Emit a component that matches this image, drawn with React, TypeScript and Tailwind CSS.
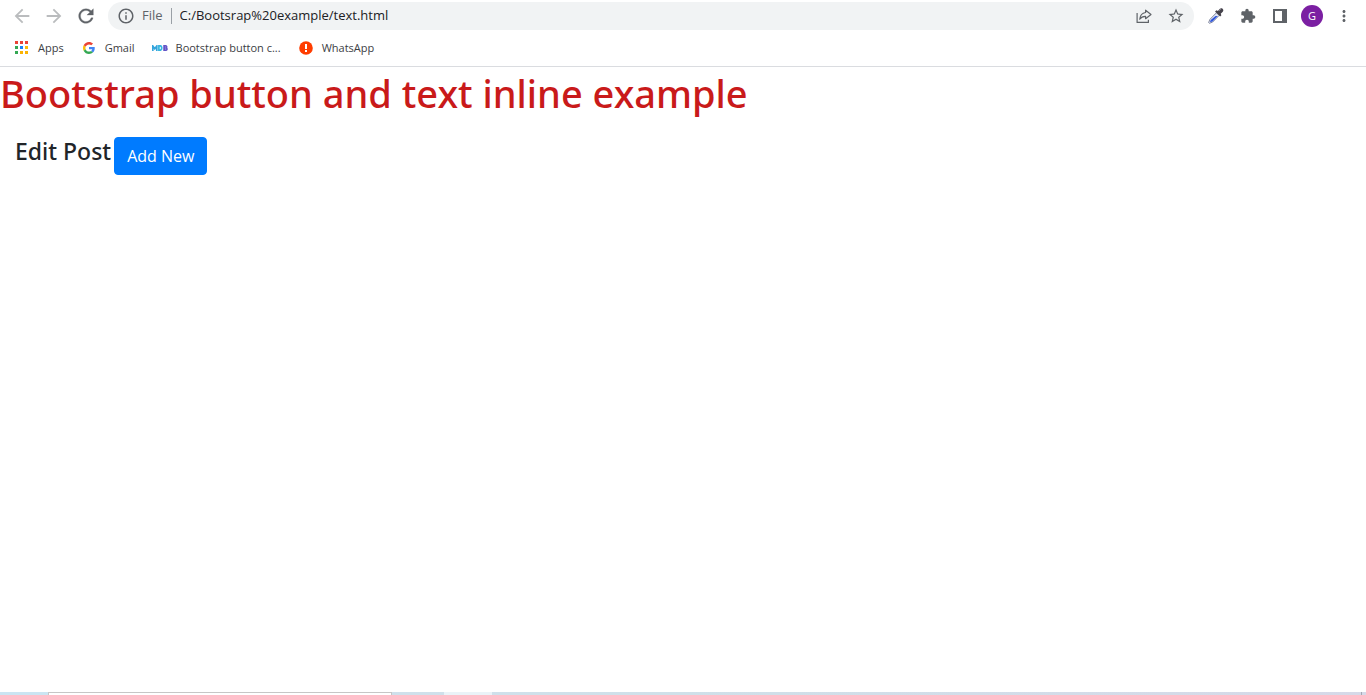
import type { ReactNode } from "react";
import { MdArrowBack, MdArrowForward, MdExtension, MdInfoOutline, MdMoreVert, MdStarBorder } from "react-icons/md";

function ToolButton({ label, children }: { label: string; children: ReactNode }) {
  return (
    <button type="button" aria-label={label} className="flex h-7 w-8 shrink-0 items-center justify-center text-[#5f6368]">
      {children}
    </button>
  );
}

function ReloadIcon() {
  return (
    <svg width="22" height="22" viewBox="0 0 24 24">
      <path
        fill="currentColor"
        stroke="currentColor"
        strokeWidth="0.3"
        d="M17.650 6.350C16.200 4.900 14.210 4 12 4c-4.420 0-7.990 3.580-7.990 8s3.570 8 7.990 8c3.730 0 6.840-2.550 7.730-6h-2.080c-.82 2.330-3.040 4-5.650 4-3.310 0-6-2.690-6-6s2.690-6 6-6c1.660 0 3.140.69 4.220 1.780L13 11h7V4z"
      />
    </svg>
  );
}

function ShareIcon() {
  return (
    <svg width="16" height="16" viewBox="0 0 16 16" fill="none" stroke="currentColor" strokeWidth="1.2" strokeLinejoin="round">
      <path d="M1.1 5v9.400h11.300v-2.600" />
      <path d="M9.600 2.200 15 6.500l-5.400 4.200V8.300C6.900 8.200 5 9.200 3.700 11.200 4.100 7.500 6 5 9.600 4.500z" />
    </svg>
  );
}

function DropperIcon() {
  return (
    <svg width="18" height="18" viewBox="0 0 18 18">
      <path d="M9.500 5.700 2.900 12.400 1.600 15.600l.7.7 3.300-1.200 6.600-6.700z" fill="#dfe5f5" stroke="#858ba0" strokeWidth="1" />
      <path d="m8.500 8.900 2.300.2-5.300 5.300-2.600.9.800-2.200z" fill="#3157dc" />
      <path d="m8 4.400 1.600-1.200 1.300.8 2-2.200c1.800-1.700 4.700.8 2.900 2.900l-2.100 2 .7 1.500-1.300 1.300z" fill="#45424b" />
      <path d="m12.300 3.500 1.400-1.300" stroke="#a6a2aa" strokeWidth="1" />
    </svg>
  );
}

function PanelIcon() {
  return (
    <svg width="14" height="14" viewBox="0 0 14 14">
      <path fill="currentColor" fillRule="evenodd" d="M0 0h14v14H0zM2 2v10h7V2z" />
    </svg>
  );
}

function AppsIcon() {
  const colors = ["#ea4335", "#ea4335", "#ea4335", "#34a853", "#1a82f7", "#fbbc04", "#34a853", "#fbb304", "#fbb304"];
  return (
    <svg width="14" height="14" viewBox="0 0 14 14" shapeRendering="crispEdges">
      {colors.map((color, i) => (
        <rect key={i} x={(i % 3) * 5} y={Math.floor(i / 3) * 5} width="3" height="3" fill={color} />
      ))}
    </svg>
  );
}

function GoogleIcon() {
  return (
    <svg width="12" height="12" viewBox="0 0 48 48">
      <path fill="#ea4335" d="M24 9.500c3.540 0 6.710 1.220 9.210 3.600l6.850-6.850C35.900 2.380 30.470 0 24 0 14.620 0 6.510 5.380 2.560 13.220l7.980 6.190C12.430 13.720 17.740 9.500 24 9.500z" />
      <path fill="#4285f4" d="M46.980 24.550c0-1.570-.15-3.090-.38-4.550H24v9.020h12.940c-.58 2.960-2.260 5.480-4.780 7.180l7.730 6c4.510-4.180 7.090-10.360 7.090-17.650z" />
      <path fill="#fbbc05" d="M10.530 28.590c-.48-1.450-.76-2.990-.76-4.590s.27-3.140.76-4.590l-7.980-6.190C.92 16.460 0 20.120 0 24s.92 7.540 2.560 10.780z" />
      <path fill="#34a853" d="M24 48c6.480 0 11.930-2.130 15.890-5.810l-7.730-6c-2.150 1.450-4.920 2.300-8.160 2.300-6.260 0-11.570-4.220-13.470-9.910l-7.980 6.190C6.510 42.620 14.620 48 24 48z" />
    </svg>
  );
}

function MdbIcon() {
  return (
    <svg width="16" height="6" viewBox="0 0 16 6" fill="none" strokeWidth="1.700">
      <path stroke="#35a5dc" d="M.8 6V1l2 2.800L4.800 1v5" />
      <path stroke="#35b6df" d="M6.900.8v4.400h1.200c2.200 0 2.200-4.400 0-4.400z" />
      <path stroke="#6253c7" d="M12.100.8v4.400h1.500c1.900 0 1.900-2.200 0-2.200h-1.500 1.200c1.800 0 1.800-2.200 0-2.200z" />
    </svg>
  );
}

function AlertIcon() {
  return (
    <svg width="14" height="14" viewBox="0 0 14 14">
      <circle cx="7" cy="7" r="6.800" fill="#ff3d00" />
      <path fill="#fff" d="M6 3h2v5H6zM6 9h2v2H6z" />
    </svg>
  );
}

function Bookmark({ icon, children }: { icon: ReactNode; children: ReactNode }) {
  return (
    <a href="#" className="flex h-7 items-center gap-2 text-[#3c4043]">
      <span className="flex w-4 shrink-0 justify-center">{icon}</span>
      <span>{children}</span>
    </a>
  );
}

export default function App() {
  return (
    <div className="flex min-h-screen flex-col bg-white font-['Open_Sans','Noto_Sans',sans-serif]">
      <header className="border-b border-[#dadce0]">
        <div className="flex h-8 items-center gap-1.5 px-1.5">
          <nav aria-label="History" className="flex">
            <button type="button" aria-label="Back" className="flex h-7 w-8 items-center justify-center text-[#babcbe]"><MdArrowBack size={22} /></button>
            <button type="button" aria-label="Forward" className="flex h-7 w-8 items-center justify-center text-[#babcbe]"><MdArrowForward size={22} /></button>
            <ToolButton label="Reload"><ReloadIcon /></ToolButton>
          </nav>
          <div className="flex h-7 min-w-0 flex-1 items-center rounded-full bg-[#f1f3f4] pl-[9px] pr-0.5 text-[13px]">
            <MdInfoOutline size={18} className="shrink-0 text-[#5f6368]" />
            <label htmlFor="address" className="ml-[7px] text-[#5f6368]">File</label>
            <span className="mx-2 h-4 w-px bg-[#9aa0a6]" />
            <input id="address" type="text" defaultValue="C:/Bootsrap%20example/text.html" className="min-w-0 flex-1 bg-transparent text-[#202124] outline-none" />
            <ToolButton label="Share"><ShareIcon /></ToolButton>
            <ToolButton label="Bookmark this page"><MdStarBorder size={18} /></ToolButton>
          </div>
          <div className="flex">
            <ToolButton label="Colour picker"><DropperIcon /></ToolButton>
            <ToolButton label="Extensions"><MdExtension size={16} /></ToolButton>
            <ToolButton label="Side panel"><PanelIcon /></ToolButton>
            <button type="button" className="flex h-7 w-8 items-center justify-center">
              <span className="flex size-[22px] items-center justify-center rounded-full bg-[#7b1fa2] text-[11px] text-white">G</span>
            </button>
            <ToolButton label="Menu"><MdMoreVert size={18} /></ToolButton>
          </div>
        </div>
        <nav aria-label="Bookmarks" className="flex h-[34px] items-start gap-[17px] px-3.5 pt-0.5 text-[11px]">
          <Bookmark icon={<AppsIcon />}>Apps</Bookmark>
          <Bookmark icon={<GoogleIcon />}>Gmail</Bookmark>
          <Bookmark icon={<MdbIcon />}>Bootstrap button c...</Bookmark>
          <Bookmark icon={<AlertIcon />}>WhatsApp</Bookmark>
        </nav>
      </header>

      <main className="flex-1 pt-0.5">
        <h1 className="font-['Noto_Sans',sans-serif] text-[38px] font-medium leading-[48px] text-[#c91a1a]">Bootstrap button and text inline example</h1>
        <div className="flex items-start gap-[3px] px-[15px] pt-5">
          <h2 className="font-['Noto_Sans',sans-serif] text-[23px] font-medium leading-[29px] text-[#212529]">Edit Post</h2>
          <button type="button" className="rounded border border-[#007bff] bg-[#007bff] px-3 py-1.5 text-[16px] leading-6 text-white">Add New</button>
        </div>
      </main>

      <footer className="flex h-[3px] bg-linear-to-r from-[#cfe0ee] via-[#cfe0e9] to-[#d6d9e8]">
        <span className="w-12 bg-[#cbe5f2]" />
        <span className="w-[344px] border-x border-t border-[#c6c6c6] bg-white" />
        <span className="w-[52px]" />
        <span className="w-12 bg-[#eaf3f8]" />
        <span className="mr-1 ml-auto w-px bg-[#a5a8b3]" />
      </footer>
    </div>
  );
}
